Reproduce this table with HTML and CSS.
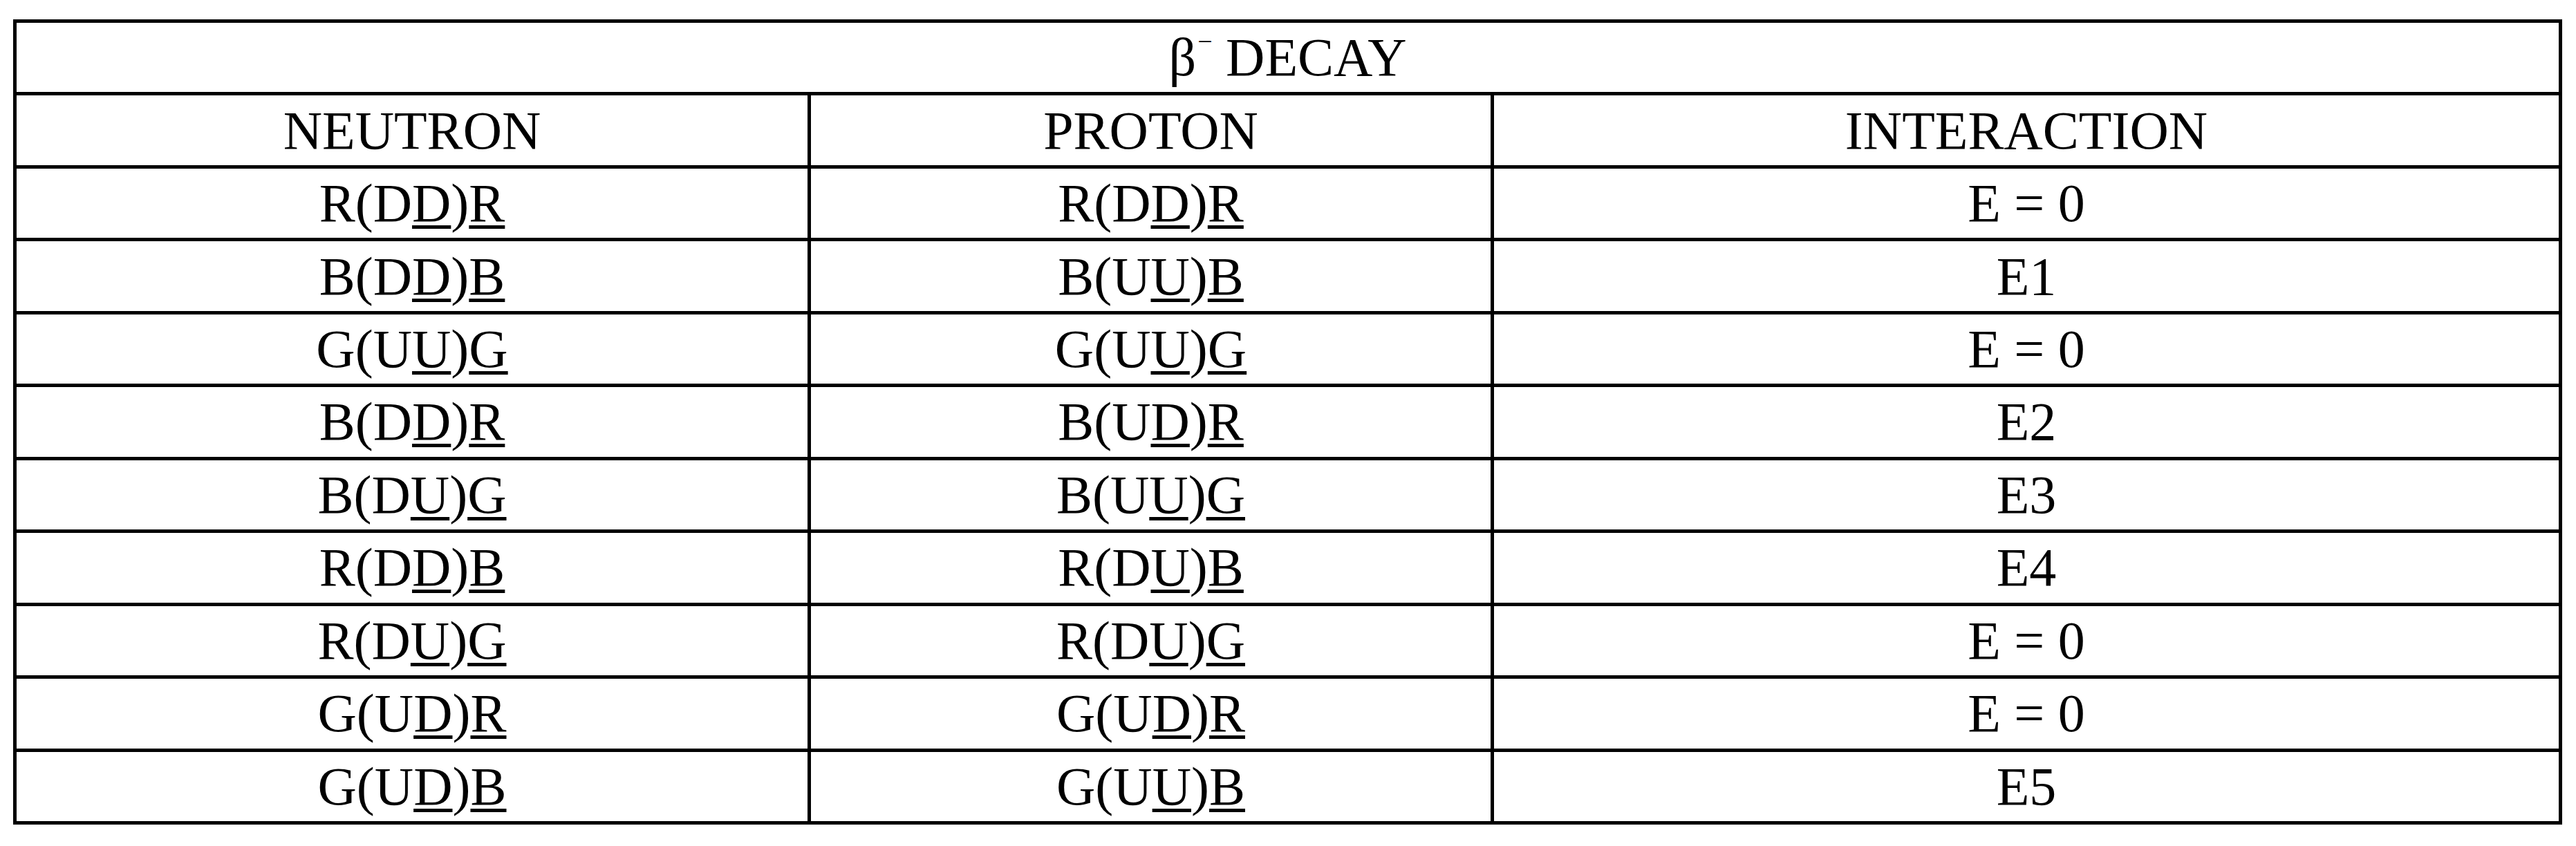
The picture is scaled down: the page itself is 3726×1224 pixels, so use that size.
FILE: index.html
```html
<!DOCTYPE html>
<html lang="en">
<head>
<meta charset="utf-8">
<title>β− DECAY</title>
<link rel="stylesheet" href="styles.css">
</head>
<body>
<div class="table">
  <div class="cell title"><span>β<sup class="minus">−</sup> DECAY</span></div>
  <div class="cell"><span>NEUTRON</span></div>
  <div class="cell"><span>PROTON</span></div>
  <div class="cell"><span>INTERACTION</span></div>

  <div class="cell"><span>R(D<u>D</u>)<u>R</u></span></div>
  <div class="cell"><span>R(D<u>D</u>)<u>R</u></span></div>
  <div class="cell"><span>E = 0</span></div>

  <div class="cell"><span>B(D<u>D</u>)<u>B</u></span></div>
  <div class="cell"><span>B(U<u>U</u>)<u>B</u></span></div>
  <div class="cell"><span>E1</span></div>

  <div class="cell"><span>G(U<u>U</u>)<u>G</u></span></div>
  <div class="cell"><span>G(U<u>U</u>)<u>G</u></span></div>
  <div class="cell"><span>E = 0</span></div>

  <div class="cell"><span>B(D<u>D</u>)<u>R</u></span></div>
  <div class="cell"><span>B(U<u>D</u>)<u>R</u></span></div>
  <div class="cell"><span>E2</span></div>

  <div class="cell"><span>B(D<u>U</u>)<u>G</u></span></div>
  <div class="cell"><span>B(U<u>U</u>)<u>G</u></span></div>
  <div class="cell"><span>E3</span></div>

  <div class="cell"><span>R(D<u>D</u>)<u>B</u></span></div>
  <div class="cell"><span>R(D<u>U</u>)<u>B</u></span></div>
  <div class="cell"><span>E4</span></div>

  <div class="cell"><span>R(D<u>U</u>)<u>G</u></span></div>
  <div class="cell"><span>R(D<u>U</u>)<u>G</u></span></div>
  <div class="cell"><span>E = 0</span></div>

  <div class="cell"><span>G(U<u>D</u>)<u>R</u></span></div>
  <div class="cell"><span>G(U<u>D</u>)<u>R</u></span></div>
  <div class="cell"><span>E = 0</span></div>

  <div class="cell"><span>G(U<u>D</u>)<u>B</u></span></div>
  <div class="cell"><span>G(U<u>U</u>)<u>B</u></span></div>
  <div class="cell"><span>E5</span></div>
</div>
</body>
</html>
```

FILE: styles.css
```css
html, body {
  margin: 0;
  padding: 0;
  background: #fff;
}

body {
  font-family: "Liberation Serif", "Times New Roman", serif;
  color: #000;
}

.table {
  box-sizing: border-box;
  width: 3687px;
  height: 1165px;
  margin: 28px 0 0 19px;
  padding: 5px;
  background: #000;
  display: grid;
  grid-template-columns: 1144px 983px 1540px;
  grid-template-rows: repeat(11, 1fr);
  gap: 5px;
}

.cell {
  background: #fff;
  display: flex;
  align-items: center;
  justify-content: center;
  font-size: 78px;
  line-height: 1;
  white-space: nowrap;
}

.title {
  grid-column: 1 / -1;
}

.minus {
  display: inline-block;
  font-size: 38px;
  line-height: 0;
  vertical-align: 36px;
  margin-left: 2px;
}

u {
  text-decoration-line: underline;
  text-decoration-thickness: 5px;
  text-underline-offset: 6px;
  text-decoration-skip-ink: none;
}
```
